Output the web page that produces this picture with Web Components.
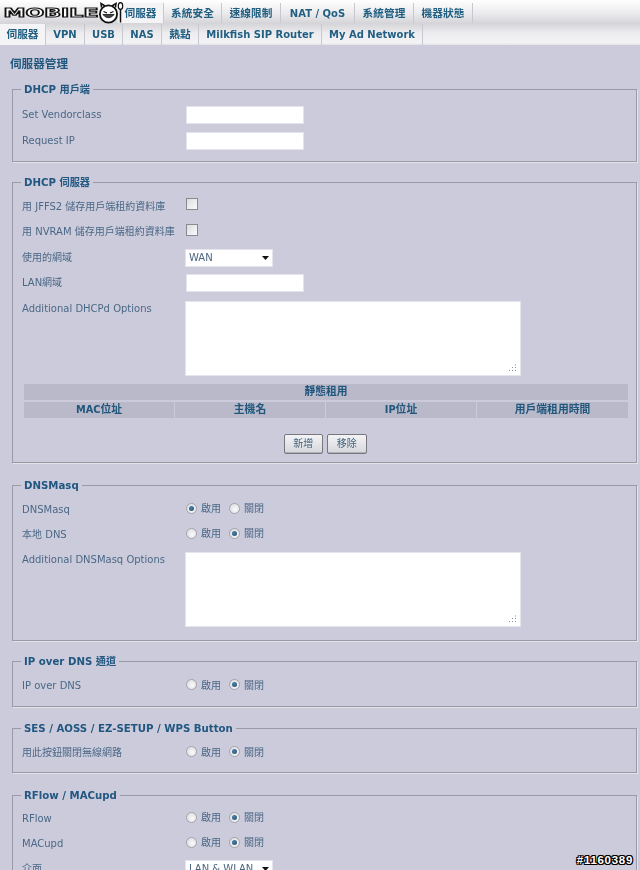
<!DOCTYPE html>
<html lang="zh-Hant"><head><meta charset="utf-8">
<style>
html,body{margin:0;padding:0;width:640px;height:870px;overflow:hidden;background:#cccbdb;}
body{font-family:"DejaVu Sans","Noto Sans CJK TC",sans-serif;position:relative;}
</style></head><body>
<router-page>
  <router-logo slot="logo"></router-logo>
  <tab-bar slot="tabs" style="--h:20px;--first:118px;--pt:3px;--g:linear-gradient(#fff,#ececee 55%,#d6d6da)">
    <tab-item active cjk w="46">伺服器</tab-item><tab-item cjk w="58">系統安全</tab-item><tab-item cjk w="59">速線限制</tab-item><tab-item w="74">NAT / QoS</tab-item><tab-item cjk w="59">系統管理</tab-item><tab-item cjk w="59">機器狀態</tab-item>
  </tab-bar>
  <tab-bar slot="tabs" style="--h:21px;--first:0px;--pt:1px;--g:linear-gradient(#d4d4d8,#ececee 45%,#f3f3f5 90%,#e2e2e8)">
    <tab-item active cjk w="46">伺服器</tab-item><tab-item w="39">VPN</tab-item><tab-item w="38">USB</tab-item><tab-item w="39">NAS</tab-item><tab-item cjk w="37">熱點</tab-item><tab-item w="123">Milkfish SIP Router</tab-item><tab-item w="101">My Ad Network</tab-item>
  </tab-bar>
  <page-title>伺服器管理</page-title>

  <form-group legend="DHCP 用戶端" h="73" mt="11" pad="12">
    <form-row label="Set Vendorclass"><text-box></text-box></form-row>
    <form-row label="Request IP"><text-box></text-box></form-row>
  </form-group>

  <form-group legend="DHCP 伺服器" h="281" mt="20" style="--rh:25.5px">
    <form-row label="用 JFFS2 儲存用戶端租約資料庫"><check-box></check-box></form-row>
    <form-row label="用 NVRAM 儲存用戶端租約資料庫"><check-box></check-box></form-row>
    <form-row label="使用的網域"><select-box>WAN</select-box></form-row>
    <form-row label="LAN網域"><text-box></text-box></form-row>
    <form-row label="Additional DHCPd Options" tall><area-box></area-box></form-row>
    <lease-table></lease-table>
    <button-row><push-button>新增</push-button><push-button>移除</push-button></button-row>
  </form-group>

  <form-group legend="DNSMasq" h="156" mt="22" style="--rh:25px">
    <form-row label="DNSMasq"><radio-pair on="1"></radio-pair></form-row>
    <form-row label="本地 DNS"><radio-pair on="2"></radio-pair></form-row>
    <form-row label="Additional DNSMasq Options" tall><area-box></area-box></form-row>
  </form-group>

  <form-group legend="IP over DNS 通道" h="46" mt="20">
    <form-row label="IP over DNS"><radio-pair on="2"></radio-pair></form-row>
  </form-group>

  <form-group legend="SES / AOSS / EZ-SETUP / WPS Button" h="45" mt="21">
    <form-row label="用此按鈕關閉無線網路"><radio-pair on="2"></radio-pair></form-row>
  </form-group>

  <form-group legend="RFlow / MACupd" h="140" mt="22" pad="10" style="--rh:25px">
    <form-row label="RFlow"><radio-pair on="2"></radio-pair></form-row>
    <form-row label="MACupd"><radio-pair on="2"></radio-pair></form-row>
    <form-row label="介面"><select-box>LAN &amp; WLAN</select-box></form-row>
  </form-group>
</router-page>
<water-mark>#1160389</water-mark>
<script>
const FONT='"DejaVu Sans","Noto Sans CJK TC",sans-serif';
function def(name,html){
  customElements.define(name,class extends HTMLElement{
    connectedCallback(){
      if(this.shadowRoot)return;
      const s=this.attachShadow({mode:'open'});
      s.innerHTML=typeof html==='function'?html(this):html;
    }
  });
}
def('router-page',`<style>:host{display:block;position:relative;width:640px;height:870px;overflow:hidden;filter:blur(.35px);font-family:${FONT};background:#cccbdb}
.top{display:flex;flex-direction:column}
.logo{position:absolute;left:2px;top:1px;z-index:2}
.body{padding:0 4px 0 12px;box-sizing:border-box;width:640px}</style>
<div class="logo"><slot name="logo"></slot></div>
<div class="top"><slot name="tabs"></slot></div><div class="body"><slot></slot></div>`);
def('router-logo',`<style>:host{display:block;width:122px;height:24px}svg{display:block}</style>
<svg width="122" height="24" viewBox="0 0 122 24">
<text x="1.5" y="16" textLength="95" lengthAdjust="spacingAndGlyphs" font-family="DejaVu Sans" font-weight="700" font-size="12.5" fill="#fff" stroke="#111" stroke-width="1.1">MOBILE</text>
<path d="M99.500 6.500L99 2.500l4 2.500M113.500 6.500L114 2.500l-4 2.500" stroke="#111" stroke-width="1.500" fill="#fff"/>
<circle cx="106.500" cy="13" r="8.600" fill="#fff" stroke="#111" stroke-width="1.800"/>
<path d="M101.500 10.500l3.500 1.500M111.500 10.500l-3.500 1.500" stroke="#111" stroke-width="1.300"/>
<path d="M100.800 13.500q5.700 6.500 11.400 0z" fill="#444" stroke="#111" stroke-width=".8"/>
<path d="M118.500 1.500v20" stroke="#111" stroke-width="1.500"/>
<ellipse cx="118.500" cy="5" rx="2.200" ry="3.400" fill="#fff" stroke="#111" stroke-width="1.200"/>
</svg>`);
def('tab-bar',`<style>:host{display:block;height:var(--h);padding-top:var(--pt);background:var(--g)}
.r{display:flex;height:100%;padding-left:var(--first)}</style><div class="r"><slot></slot></div>`);
def('tab-item',h=>`<style>:host{display:block;box-sizing:border-box;width:${h.getAttribute('w')}px;height:100%;border-right:1px solid #c8c9d0;background:${h.hasAttribute('active')?'#f4f4f6':'transparent'};
text-align:center;font:700 ${h.hasAttribute('cjk')?'10.7':'10'}px/21px ${FONT};color:#215f82;white-space:nowrap;overflow:hidden}</style><slot></slot>`);
def('page-title',`<style>:host{display:block;height:22px;margin-top:11px;margin-left:-2px;font:700 11.600px/17px ${FONT};color:#21577c}</style><slot></slot>`);
def('form-group',h=>`<style>:host{display:block;box-sizing:border-box;height:${h.getAttribute('h')}px;margin-top:${h.getAttribute('mt')}px;margin-right:-1px;border:1px solid #9a9aa6;box-shadow:1px 1px 0 #e2e2ea;position:relative;padding:${h.getAttribute('pad')||11}px 9px 0 9px}
.lg{position:absolute;left:8px;top:-8px;background:#cccbdb;padding:0 3px;font:700 10.200px/15px ${FONT};color:#215780;white-space:nowrap}</style>
<div class="lg">${h.getAttribute('legend')}</div><slot></slot>`);
def('form-row',h=>`<style>:host{display:flex;height:var(--rh,26px);align-items:${h.hasAttribute('tall')?'flex-start':'center'}}
.l{width:164px;flex:none;font:400 10px/18px ${FONT};color:#4a6886;white-space:nowrap}
${h.hasAttribute('tall')?'.l{padding-top:3.5px}':''}</style><div class="l">${h.getAttribute('label')}</div><slot></slot>`);
def('text-box',`<style>:host{display:block;box-sizing:border-box;width:118px;height:18px;background:#fff;border:1px solid #e4e4ec}</style>`);
def('check-box',`<style>:host{display:block;box-sizing:border-box;width:12px;height:12px;margin:-5px 0 0 0;background:linear-gradient(135deg,#dcdce0,#fbfbfb);border:1px solid #8a8a92}</style>`);
def('select-box',`<style>:host{display:flex;align-items:center;justify-content:space-between;box-sizing:border-box;width:88px;height:18px;background:#fff;border:1px solid #e4e4ec;padding:0 3px 0 3px;font:400 10px ${FONT};color:#4a6580;margin-left:-1px}
svg{display:block}</style><span><slot></slot></span><svg width="7" height="4" viewBox="0 0 7 4"><path d="M0 0h7L3.500 4z" fill="#111"/></svg>`);
def('area-box',`<style>:host{display:block;box-sizing:border-box;width:336px;height:75px;background:#fff;border:1px solid #e4e4ec;position:relative;margin:5px 0 0 -1px;flex:none}
svg{position:absolute;right:3px;bottom:3px}</style><svg width="8" height="8" viewBox="0 0 8 8"><path d="M6.500 0.500v1M6.500 3v1M6.500 6v1M3.500 3v1M3.500 6v1M.5 6v1" stroke="#8f8f98" stroke-width="1"/></svg>`);
def('radio-pair',h=>{const on=h.getAttribute('on');const r=n=>`<span class="o"><span class="r ${on==n?'on':''}"></span><span class="t">${n==1?'啟用':'關閉'}</span></span>`;
return `<style>:host{display:flex;gap:8px;margin-top:-1px}.o{display:flex;align-items:center;gap:4px}
.r{box-sizing:border-box;width:11px;height:11px;border-radius:50%;border:1px solid #a3a3ad;background:radial-gradient(circle at 60% 60%,#fafafa,#d8d8de);display:flex;align-items:center;justify-content:center;margin-top:-2px}
.on::after{content:"";width:5px;height:5px;border-radius:50%;background:radial-gradient(circle at 40% 35%,#4a80a4,#1d4e74)}
.t{font:400 10px/14px ${FONT};color:#4a6886}</style>${r(1)}${r(2)}`});
def('lease-table',`<style>:host{display:grid;grid-template-columns:150px 150px 150px 151px;gap:2px 1px;width:603px;position:absolute;left:11px;top:201px;font:700 10.800px/16px ${FONT};color:#21577c;text-align:center}
div{background:#b9b9ca;height:16px;white-space:nowrap}.h{grid-column:1/5}span{font-size:9.800px}</style>
<div class="h">靜態租用</div><div><span>MAC</span>位址</div><div>主機名</div><div><span>IP</span>位址</div><div>用戶端租用時間</div>`);
def('button-row',`<style>:host{display:flex;gap:4px;justify-content:center;position:absolute;left:0;right:0;top:251px;padding-left:1px}</style><slot></slot>`);
def('push-button',`<style>:host{display:block;box-sizing:border-box;width:39.500px;height:20px;border:1px solid #77777f;border-radius:2px;background:linear-gradient(#f4f4f6,#d6d6dc);box-shadow:inset 0 -1px 0 #b0b0ba;font:400 10px/18px ${FONT};color:#3f6078;text-align:center}</style><slot></slot>`);
def('water-mark',`<style>:host{display:block;position:absolute;right:7px;bottom:4px;z-index:5;font:700 11.500px/11px "Liberation Sans",sans-serif;letter-spacing:.7px;color:#fff;text-shadow:1px 0 0 #000,-1px 0 0 #000,0 1px 0 #000,0 -1px 0 #000,1px 1px 0 #000,-1px -1px 0 #000,1px -1px 0 #000,-1px 1px 0 #000}</style><slot></slot>`);
</script>
</body></html>
